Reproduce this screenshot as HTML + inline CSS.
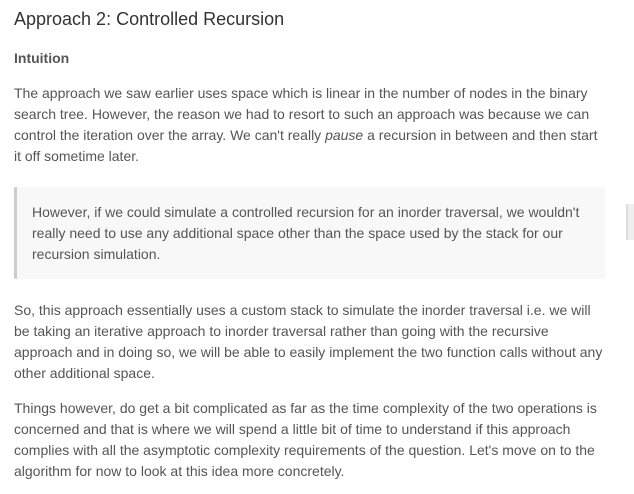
<!DOCTYPE html>
<html><head><style>
body{margin:0;width:634px;height:494px;overflow:hidden;background:#fff;font-family:"Liberation Sans",sans-serif;color:#555;}
.c{position:absolute;left:14px;width:592px;}
h3{position:absolute;left:14px;top:8px;margin:0;font-size:18px;font-weight:normal;color:#333;line-height:22px;}
.b{position:absolute;left:14px;top:49px;font-size:14px;font-weight:bold;line-height:18px;}
p{margin:0;font-size:14px;line-height:21px;}
.q{position:absolute;left:14px;top:187px;width:591px;height:92px;background:#f8f8f8;border-left:3px solid #ccc;box-sizing:border-box;border-radius:2px;}
.q p{position:absolute;left:15px;top:15px;width:560px;}
.sb{position:absolute;left:626px;top:204px;width:8px;height:36px;background:#eee;border-left:2px solid #ddd;}
</style></head><body>
<h3>Approach 2: Controlled Recursion</h3>
<div class="b">Intuition</div>
<div class="c" style="top:83px"><p>The approach we saw earlier uses space which is linear in the number of nodes in the binary search tree. However, the reason we had to resort to such an approach was because we can control the iteration over the array. We can't really <i>pause</i> a recursion in between and then start it off sometime later.</p></div>
<div class="q"><p>However, if we could simulate a controlled recursion for an inorder traversal, we wouldn't really need to use any additional space other than the space used by the stack for our recursion simulation.</p></div>
<div class="sb"></div>
<div class="c" style="top:300px"><p>So, this approach essentially uses a custom stack to simulate the inorder traversal i.e. we will be taking an iterative approach to inorder traversal rather than going with the recursive approach and in doing so, we will be able to easily implement the two function calls without any other additional space.</p></div>
<div class="c" style="top:398px"><p>Things however, do get a bit complicated as far as the time complexity of the two operations is concerned and that is where we will spend a little bit of time to understand if this approach complies with all the asymptotic complexity requirements of the question. Let's move on to the algorithm for now to look at this idea more concretely.</p></div>
</body></html>
